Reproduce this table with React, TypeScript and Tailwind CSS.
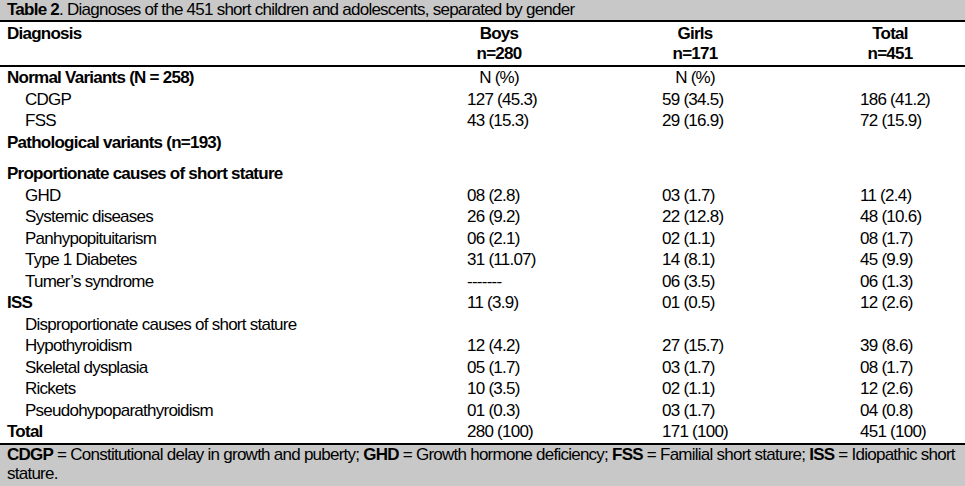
const rows: { label: string; kind: "group" | "item"; boys?: string; girls?: string; total?: string; gapBefore?: boolean }[] = [
  { label: "Normal Variants (N = 258)", kind: "group", boys: "N (%)", girls: "N (%)" },
  { label: "CDGP", kind: "item", boys: "127 (45.3)", girls: "59 (34.5)", total: "186 (41.2)" },
  { label: "FSS", kind: "item", boys: "43 (15.3)", girls: "29 (16.9)", total: "72 (15.9)" },
  { label: "Pathological variants (n=193)", kind: "group" },
  { label: "Proportionate causes of short stature", kind: "group", gapBefore: true },
  { label: "GHD", kind: "item", boys: "08 (2.8)", girls: "03 (1.7)", total: "11 (2.4)" },
  { label: "Systemic diseases", kind: "item", boys: "26 (9.2)", girls: "22 (12.8)", total: "48 (10.6)" },
  { label: "Panhypopituitarism", kind: "item", boys: "06 (2.1)", girls: "02 (1.1)", total: "08 (1.7)" },
  { label: "Type 1 Diabetes", kind: "item", boys: "31 (11.07)", girls: "14 (8.1)", total: "45 (9.9)" },
  { label: "Tumer’s syndrome", kind: "item", boys: "-------", girls: "06 (3.5)", total: "06 (1.3)" },
  { label: "ISS", kind: "group", boys: "11 (3.9)", girls: "01 (0.5)", total: "12 (2.6)" },
  { label: "Disproportionate causes of short stature", kind: "item" },
  { label: "Hypothyroidism", kind: "item", boys: "12 (4.2)", girls: "27 (15.7)", total: "39 (8.6)" },
  { label: "Skeletal dysplasia", kind: "item", boys: "05 (1.7)", girls: "03 (1.7)", total: "08 (1.7)" },
  { label: "Rickets", kind: "item", boys: "10 (3.5)", girls: "02 (1.1)", total: "12 (2.6)" },
  { label: "Pseudohypoparathyroidism", kind: "item", boys: "01 (0.3)", girls: "03 (1.7)", total: "04 (0.8)" },
  { label: "Total", kind: "group", boys: "280 (100)", girls: "171 (100)", total: "451 (100)" },
];

// no narrow face installed, so tighten Liberation Sans a little
const font = { fontFamily: '"Liberation Sans Narrow", "Arial Narrow", "Liberation Sans", Arial, sans-serif' };

export default function App() {
  return (
    <div className="w-[965px] h-[486px] bg-white text-black text-[17px] tracking-[-0.75px] overflow-hidden" style={font}>
      {/* Caption */}
      <div className="h-[20px] bg-[#c8c8c8] px-[7px] leading-[20px] whitespace-nowrap">
        <span className="font-bold">Table 2</span>. Diagnoses of the 451 short children and adolescents, separated by gender
      </div>
      <div className="h-[2px] bg-black" />

      {/* Header */}
      <div className="grid grid-cols-[460px_195px_198px_1fr] px-[7px] pt-[2px] pb-[1px] leading-[20px]">
        <div className="font-bold">Diagnosis</div>
        <div className="font-bold">
          <div className="w-[64px] text-center">Boys</div>
          <div className="w-[64px] text-center">n=280</div>
        </div>
        <div className="font-bold">
          <div className="w-[66px] text-center">Girls</div>
          <div className="w-[66px] text-center">n=171</div>
        </div>
        <div className="font-bold">
          <div className="w-[60px] text-center">Total</div>
          <div className="w-[60px] text-center">n=451</div>
        </div>
      </div>
      <div className="h-[2px] bg-black" />

      {/* Body */}
      <div className="px-[7px]">
        {rows.map((r, i) => (
          <div
            key={i}
            className={`grid grid-cols-[460px_195px_198px_1fr] leading-[21.5px] whitespace-nowrap ${r.gapBefore ? "mt-[10px]" : ""}`}
          >
            <div className={r.kind === "group" ? "font-bold" : "pl-[18px]"}>{r.label}</div>
            {r.boys === "N (%)" ? (
              <>
                <div className="w-[64px] text-center">N (%)</div>
                <div className="w-[66px] text-center">N (%)</div>
                <div />
              </>
            ) : (
              <>
                <div>{r.boys}</div>
                <div>{r.girls}</div>
                <div>{r.total}</div>
              </>
            )}
          </div>
        ))}
      </div>
      <div className="h-[2px] bg-black" />

      {/* Footnote */}
      <div className="bg-[#c8c8c8] px-[7px] leading-[19px] h-full">
        <div className="whitespace-nowrap">
          <span className="font-bold">CDGP</span> = Constitutional delay in growth and puberty; <span className="font-bold">GHD</span> = Growth
          hormone deficiency; <span className="font-bold">FSS</span> = Familial short stature; <span className="font-bold">ISS</span> = Idiopathic
          short
        </div>
        <div>stature.</div>
      </div>
    </div>
  );
}
